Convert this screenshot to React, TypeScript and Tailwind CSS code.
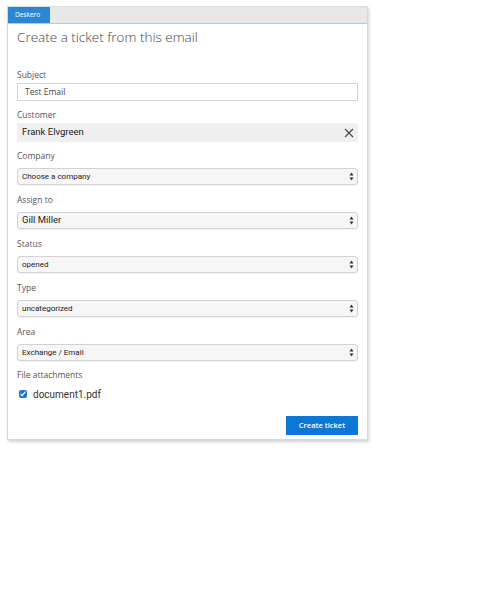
import React from "react";

const labelCls = "h-[12px] leading-[12px] text-[8.5px] text-[#555] font-['Open_Sans',sans-serif]";

function Arrows() {
  return (
    <svg width="5" height="9" viewBox="0 0 5 9" className="shrink-0">
      <path d="M2.5 0.5 L4.5 3.5 L0.5 3.5 Z" fill="#333" />
      <path d="M2.5 8.5 L4.5 5.5 L0.5 5.5 Z" fill="#333" />
    </svg>
  );
}

function SelectField({ label, value, big }: { label: string; value: string; big?: boolean }) {
  return (
    <div className="flex flex-col">
      <div className={labelCls}>{label}</div>
      <div className="mt-[6px] h-[17px] flex items-center justify-between rounded-[3px] border border-[#d2d2d2] bg-[#f6f6f6] pl-[4px] pr-[3px] shadow-[0_1px_0_rgba(0,0,0,0.04)]">
        <span
          className={`font-['Roboto',sans-serif] text-[#222] ${
            big ? "text-[9.5px]" : "text-[8px]"
          }`}
        >
          {value}
        </span>
        <Arrows />
      </div>
    </div>
  );
}

export default function App() {
  return (
    <div className="w-[500px] h-[595px] bg-white">
      <div className="ml-[7px] mt-[6px] w-[361px] flex flex-col border border-[#c9dceb] border-t-[#dcdcdc] bg-white shadow-[1px_2px_3px_rgba(0,0,0,0.18)]">
        {/* tab bar */}
        <div className="h-[17px] flex bg-[#e8e8e8] border-b border-[#a9cbe6]">
          <div className="w-[42px] h-full bg-[#2b87d3] flex items-center pl-[7px] text-white text-[6.5px] font-['Open_Sans',sans-serif]">
            Deskero
          </div>
        </div>

        <div className="px-[9px] flex flex-col">
          <div className="mt-[4px] h-[18px] leading-[18px] text-[13.5px] font-light text-[#444] font-['Open_Sans',sans-serif]">
            Create a ticket from this email
          </div>

          {/* Subject */}
          <div className="mt-[23px] flex flex-col">
            <div className={labelCls}>Subject</div>
            <div className="mt-[2px] h-[18px] flex items-center border border-[#d4d4d4] pl-[7px] text-[8.5px] text-[#444] font-['Open_Sans',sans-serif]">
              Test Email
            </div>
          </div>

          {/* Customer */}
          <div className="mt-[8px] flex flex-col">
            <div className={labelCls}>Customer</div>
            <div className="mt-[2px] h-[19px] flex items-center justify-between bg-[#efefef] pl-[5px] pr-[4px]">
              <span className="text-[9.5px] text-[#222] font-['Roboto',sans-serif]">Frank Elvgreen</span>
              <svg width="10" height="10" viewBox="0 0 10 10">
                <path d="M1 1 L9 9 M9 1 L1 9" stroke="#444" strokeWidth="1.1" />
              </svg>
            </div>
          </div>

          <div className="mt-[8px] flex flex-col gap-[9px]">
            <SelectField label="Company" value="Choose a company" />
            <SelectField label="Assign to" value="Gill Miller" big />
            <SelectField label="Status" value="opened" />
            <SelectField label="Type" value="uncategorized" />
            <SelectField label="Area" value="Exchange / Email" />
          </div>

          {/* attachments */}
          <div className="mt-[8px] flex flex-col">
            <div className={labelCls}>File attachments</div>
            <label className="mt-[7px] h-[12px] flex items-center gap-[6px] pl-[2px]">
              <input type="checkbox" defaultChecked className="w-[8px] h-[8px] accent-[#1a73e8]" />
              <span className="text-[10px] text-[#333] font-['Roboto',sans-serif]">document1.pdf</span>
            </label>
          </div>

          <div className="mt-[16px] mb-[4px] flex justify-end">
            <button className="w-[72px] h-[19px] bg-[#0b78d6] text-white text-[7.5px] font-semibold font-['Open_Sans',sans-serif]">
              Create ticket
            </button>
          </div>
        </div>
      </div>
    </div>
  );
}
